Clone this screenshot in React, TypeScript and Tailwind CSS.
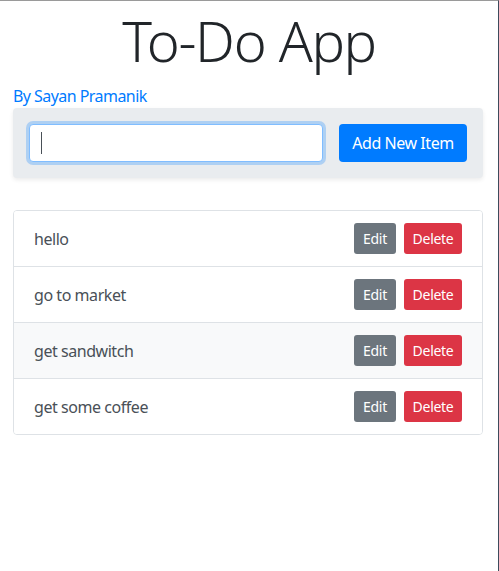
import React, { useState } from 'react'

const font = "font-['Noto_Sans','Open_Sans',sans-serif]"

export default function App() {
  const [items] = useState<string[]>(['hello', 'go to market', 'get sandwitch', 'get some coffee'])
  const [text, setText] = useState('')

  return (
    <div className={`${font} w-[499px] h-[571px] bg-white border-t border-t-[#9a9a9a] border-r border-r-[#3d4b5c] overflow-hidden tracking-[-0.45px]`}>
      <div className="px-[13px] w-[498px]">
        <h1 className="text-center text-[56px] font-light leading-[1.2] text-[#212529] mt-[6px] tracking-[-1.3px]">To-Do App</h1>
        <div className="text-[#007bff] text-base leading-6 mt-[10px] tracking-[-0.55px]">By Sayan Pramanik</div>

        {/* input panel */}
        <div className="w-[470px] bg-[#e9ecef] rounded-[4px] shadow-[0_2px_4px_rgba(0,0,0,0.08)] p-4 flex gap-4">
          <div className="flex-1 relative">
            <input
              autoFocus
              value={text}
              onChange={e => setText(e.target.value)}
              className="w-full h-[38px] px-3 bg-white border border-[#80bdff] rounded-[4px] outline-none ring-[3px] ring-[rgba(0,123,255,0.25)] text-[#495057] caret-[#495057]"
            />
            {text === '' && <span className="absolute left-[12px] top-[8px] w-px h-[22px] bg-[#495057]" />}
          </div>
          <button className="h-[38px] w-[128px] bg-[#007bff] text-white text-base rounded-[4px]">Add New Item</button>
        </div>

        {/* list */}
        <ul className="mt-8 w-[470px] border border-[#dee2e6] rounded-[4px] overflow-hidden">
          {items.map((item, i) => (
            <li
              key={i}
              className={`flex items-center justify-between px-5 py-3 text-[#495057] text-base ${i > 0 ? 'border-t border-[#dee2e6]' : ''} ${i === 2 ? 'bg-[#f8f9fa]' : 'bg-white'}`}
            >
              <span>{item}</span>
              <div className="flex gap-2 tracking-[-0.3px]">
                <button className="h-[31px] w-[42px] bg-[#6c757d] text-white text-sm rounded-[3px]">Edit</button>
                <button className="h-[31px] w-[58px] bg-[#dc3545] text-white text-sm rounded-[3px]">Delete</button>
              </div>
            </li>
          ))}
        </ul>
      </div>
    </div>
  )
}
